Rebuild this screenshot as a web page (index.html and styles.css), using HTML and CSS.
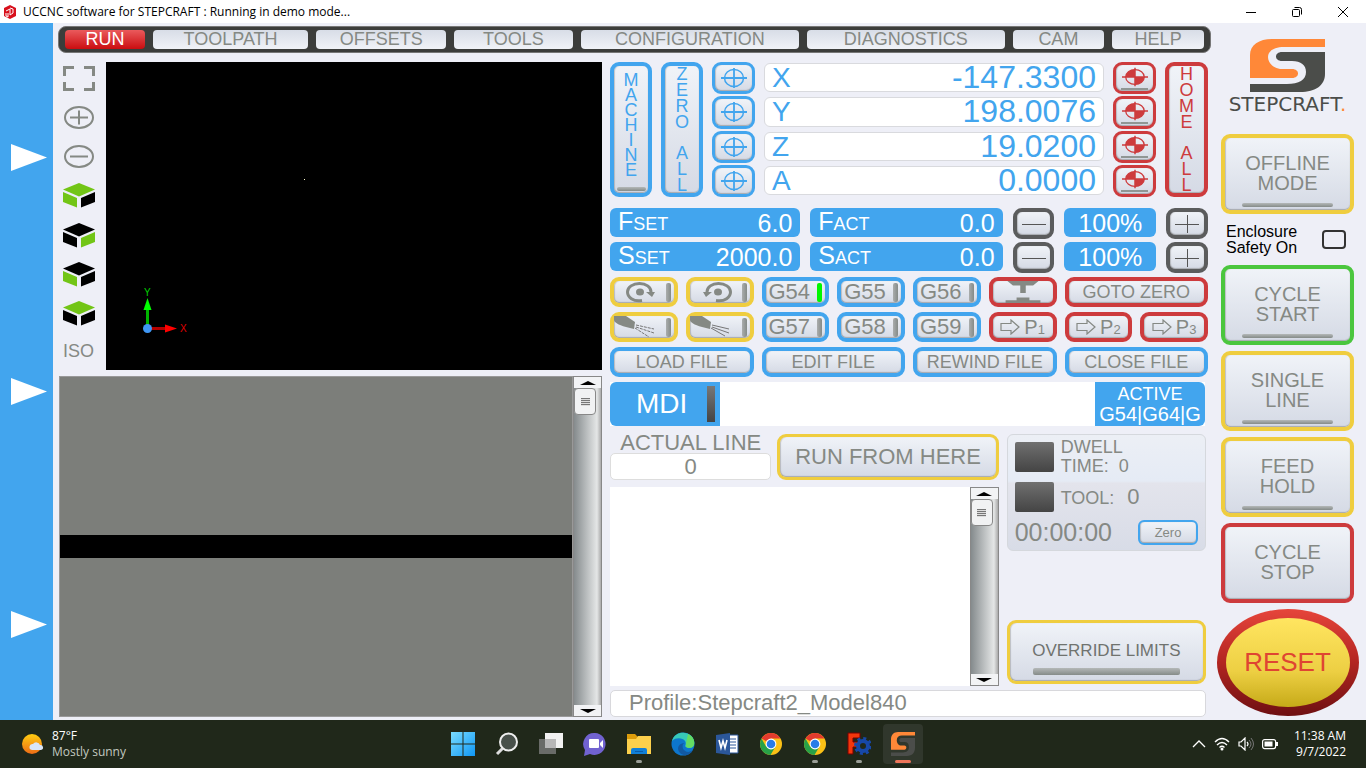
FILE: index.html
```html
<!DOCTYPE html>
<html lang="en">
<head>
<meta charset="utf-8">
<title>UCCNC software for STEPCRAFT</title>
<link rel="stylesheet" href="styles.css">
</head>
<body>
<svg class="defs" aria-hidden="true">
  <symbol id="target" viewBox="0 0 26 20"><ellipse cx="13" cy="10" rx="9.500" ry="8.500" fill="none" stroke="currentColor" stroke-width="1.500"/><path d="M0 10h26M13 0v20" stroke="currentColor" stroke-width="1.800"/></symbol>
  <symbol id="home" viewBox="0 0 28 20"><ellipse cx="14" cy="10" rx="10" ry="8" fill="none" stroke="currentColor" stroke-width="1.400"/><path d="M14 10V2A10 8 0 0 0 4 10zM14 10v8a10 8 0 0 0 10-8z" fill="currentColor"/><path d="M0 10h28M14 0v20" stroke="currentColor" stroke-width="1.600"/></symbol>
  <symbol id="arrow" viewBox="0 0 20 16"><path d="M1 4.500h10V1l8 7-8 7v-3.500H1z" fill="none" stroke="currentColor" stroke-width="1.200"/></symbol>
  <symbol id="spin" viewBox="0 0 32 22"><path d="M17 19.500C8 21 2.500 16 2.500 11 2.500 6 8 2.500 14.500 2.500S26 6 26 11" fill="none" stroke="currentColor" stroke-width="3"/><path d="M21 11h9l-3 5z" fill="currentColor"/><ellipse cx="15" cy="11" rx="4" ry="3.500" fill="currentColor"/></symbol>
  <symbol id="cs" viewBox="0 0 75 53" preserveAspectRatio="none"><path class="s-top" d="M75 0v8H34C24 8 18 12 18 18s6 12 14 12h10c8 0 8 9 0 9H0V16C0 6 9 0 22 0z"/><path class="s-bot" d="M75 13v22C75 46 66 53 50 53H0v-8h37c12 0 19-4 19-12 0-7-5-11-14-11H32c-8 0-8-9 0-9z"/></symbol>
  <symbol id="chrome" viewBox="0 0 24 24"><circle cx="12" cy="12" r="11" fill="#fbc116"/><path d="M12 12L2.500 6.500A11 11 0 0 1 21.500 6.500H12z" fill="#e33b2e"/><path d="M2.500 6.500A11 11 0 0 0 11.500 23l5-8.500L12 12 7 14.500z" fill="#28a148"/><circle cx="12" cy="12" r="5.400" fill="#fff"/><circle cx="12" cy="12" r="4.300" fill="#287be8"/></symbol>
</svg>

<header class="titlebar">
  <svg class="app-icon" viewBox="0 0 14 14"><path d="M7 0l6 3v8l-6 3-6-3V3z" fill="#d8101c"/><path d="M3 6l4-2v6l3-2V4L7 3M3 8v3l2 1V8" stroke="#fff" fill="none"/></svg>
  <span class="title">UCCNC software for STEPCRAFT : Running in demo mode...</span>
  <button class="win" aria-label="Minimize"><svg viewBox="0 0 12 12"><path d="M1 6.500h10" stroke="#000"/></svg></button>
  <button class="win" aria-label="Restore"><svg viewBox="0 0 12 12"><path d="M3.500 1.500h5a2 2 0 0 1 2 2v5" fill="none" stroke="#000"/><rect x="1.500" y="3.500" width="7" height="7" rx="1" fill="none" stroke="#000"/></svg></button>
  <button class="win" aria-label="Close"><svg viewBox="0 0 12 12"><path d="M1 1l10 10M11 1L1 11" stroke="#000"/></svg></button>
</header>

<main class="app">
  <aside class="rail">
    <button aria-label="Expand top"><svg viewBox="0 0 36 27"><path d="M0 0l36 13.500L0 27z" fill="#fff"/></svg></button>
    <button aria-label="Expand middle"><svg viewBox="0 0 36 27"><path d="M0 0l36 13.500L0 27z" fill="#fff"/></svg></button>
    <button aria-label="Expand bottom"><svg viewBox="0 0 36 27"><path d="M0 0l36 13.500L0 27z" fill="#fff"/></svg></button>
  </aside>

  <div class="workspace">
    <nav class="tabs">
      <button class="tab t80 active">RUN</button>
      <button class="tab t156">TOOLPATH</button>
      <button class="tab t130">OFFSETS</button>
      <button class="tab t119">TOOLS</button>
      <button class="tab t219">CONFIGURATION</button>
      <button class="tab t198">DIAGNOSTICS</button>
      <button class="tab t92">CAM</button>
      <button class="tab t92">HELP</button>
    </nav>

    <div class="columns">
      <section class="left">
        <div class="view">
          <div class="view-tools">
            <button aria-label="Fit"><svg viewBox="0 0 32 25"><path d="M11 1.500H1.500V10M21 1.500h9.500V10M1.500 16v7.500H11M30.500 16v7.500H21" fill="none" stroke="#858984" stroke-width="3"/></svg></button>
            <button aria-label="Zoom in"><svg viewBox="0 0 32 25"><ellipse cx="16" cy="12.500" rx="14" ry="10.500" fill="none" stroke="#858984" stroke-width="2"/><path d="M7 12.500h18M16 5.500v14" stroke="#858984" stroke-width="2"/></svg></button>
            <button aria-label="Zoom out"><svg viewBox="0 0 32 25"><ellipse cx="16" cy="12.500" rx="14" ry="10.500" fill="none" stroke="#858984" stroke-width="2"/><path d="M7 12.500h18" stroke="#858984" stroke-width="2"/></svg></button>
            <button aria-label="View perspective"><svg viewBox="0 0 32 25"><path d="M16 0l16 6.500-16 7L0 6.500z" fill="#72c516"/><path d="M0 9l14 6v9.500L0 19z" fill="#72c516"/><path d="M32 9l-14 6v9.500L32 19z"/></svg></button>
            <button aria-label="View right"><svg viewBox="0 0 32 25"><path d="M16 0l16 6.500-16 7L0 6.500z"/><path d="M0 9l14 6v9.500L0 19z"/><path d="M32 9l-14 6v9.500L32 19z" fill="#72c516"/></svg></button>
            <button aria-label="View front"><svg viewBox="0 0 32 25"><path d="M16 0l16 6.500-16 7L0 6.500z"/><path d="M0 9l14 6v9.500L0 19z" fill="#72c516"/><path d="M32 9l-14 6v9.500L32 19z"/></svg></button>
            <button aria-label="View top"><svg viewBox="0 0 32 25"><path d="M16 0l16 6.500-16 7L0 6.500z" fill="#72c516"/><path d="M0 9l14 6v9.500L0 19z"/><path d="M32 9l-14 6v9.500L32 19z"/></svg></button>
            <button class="iso">ISO</button>
          </div>
          <div class="canvas">
            <span class="point"></span>
            <svg class="axes" viewBox="0 0 50 50"><path d="M7.500 35V17" stroke="#00b400" stroke-width="3"/><path d="M7.500 8l4 12h-8z" fill="#00ff00"/><path d="M10 38.500h17" stroke="#b40000" stroke-width="3"/><path d="M37 38.500l-12-4v8z" fill="red"/><circle cx="7.500" cy="38.500" r="4.500" fill="#3f97f5"/></svg>
            <span class="axis-y">Y</span><span class="axis-x">X</span>
          </div>
        </div>
        <div class="code">
          <div class="code-lines"><div class="code-current"></div></div>
          <div class="scroll"><button class="up" aria-label="Scroll up"></button><div class="thumb"></div><button class="down" aria-label="Scroll down"></button></div>
        </div>
      </section>

      <section class="right">
        <div class="dro">
          <button class="key blue tall machine"><span class="stack">MACHINE</span><i class="bar"></i></button>
          <button class="key blue tall"><span class="stack">ZERO</span><span class="stack">ALL</span></button>
          <div class="rows">
            <button class="key blue" aria-label="Zero X"><svg class="ic"><use href="#target"/></svg></button>
            <button class="key blue" aria-label="Zero Y"><svg class="ic"><use href="#target"/></svg></button>
            <button class="key blue" aria-label="Zero Z"><svg class="ic"><use href="#target"/></svg></button>
            <button class="key blue" aria-label="Zero A"><svg class="ic"><use href="#target"/></svg></button>
          </div>
          <div class="rows">
            <div class="axis"><span>X</span><output>-147.3300</output></div>
            <div class="axis"><span>Y</span><output>198.0076</output></div>
            <div class="axis"><span>Z</span><output>19.0200</output></div>
            <div class="axis"><span>A</span><output>0.0000</output></div>
          </div>
          <div class="rows">
            <button class="key red homekey" aria-label="Home X"><svg class="ic"><use href="#home"/></svg><i></i></button>
            <button class="key red homekey" aria-label="Home Y"><svg class="ic"><use href="#home"/></svg><i></i></button>
            <button class="key red homekey" aria-label="Home Z"><svg class="ic"><use href="#home"/></svg><i></i></button>
            <button class="key red homekey" aria-label="Home A"><svg class="ic"><use href="#home"/></svg><i></i></button>
          </div>
          <button class="key red tall"><span class="stack">HOME</span><span class="stack">ALL</span></button>
        </div>

        <div class="feeds">
          <div class="chip"><span class="name">F<small>SET</small></span><output>6.0</output></div>
          <div class="chip"><span class="name">F<small>ACT</small></span><output>0.0</output></div>
          <button class="key dark" aria-label="Feed minus"><svg class="sign" viewBox="0 0 24 20"><path d="M0 10.500h24" stroke="#555"/></svg></button>
          <div class="chip pct"><output>100%</output></div>
          <button class="key dark" aria-label="Feed plus"><svg class="sign" viewBox="0 0 24 20"><path d="M0 10.500h24M12.500 1v18" stroke="#555"/></svg></button>
          <div class="chip"><span class="name">S<small>SET</small></span><output>2000.0</output></div>
          <div class="chip"><span class="name">S<small>ACT</small></span><output>0.0</output></div>
          <button class="key dark" aria-label="Speed minus"><svg class="sign" viewBox="0 0 24 20"><path d="M0 10.500h24" stroke="#555"/></svg></button>
          <div class="chip pct"><output>100%</output></div>
          <button class="key dark" aria-label="Speed plus"><svg class="sign" viewBox="0 0 24 20"><path d="M0 10.500h24M12.500 1v18" stroke="#555"/></svg></button>
        </div>

        <div class="keys">
          <button class="key yellow lit" aria-label="Spindle clockwise"><svg class="spin"><use href="#spin"/></svg><i class="led"></i></button>
          <button class="key yellow lit" aria-label="Spindle counterclockwise"><svg class="spin flip"><use href="#spin"/></svg><i class="led"></i></button>
          <button class="key blue lit">G54<i class="led on"></i></button>
          <button class="key blue lit">G55<i class="led"></i></button>
          <button class="key blue lit">G56<i class="led"></i></button>
          <button class="key red" aria-label="Probe"><svg class="probe" viewBox="0 0 38 24"><path d="M2 0h34l-6 5h-8v8h-6V5H8zM12 18h14v3h12v3H0v-3h12z" fill="#858984"/></svg></button>
          <button class="key red span2 mid">GOTO ZERO</button>
          <button class="key yellow lit" aria-label="Mist"><svg class="spray" viewBox="0 0 44 22"><path d="M0 0h12l9 6-1 7-8-2C4 9 0 6 0 4z" fill="#858984"/><path d="M22 9l18 4M22 11l18 6M21 12l14 9" stroke="#777" stroke-dasharray="3 1" fill="none"/></svg><i class="led"></i></button>
          <button class="key yellow lit" aria-label="Flood"><svg class="spray" viewBox="0 0 44 22"><path d="M0 0h12l9 6-1 7-8-2C4 9 0 6 0 4z" fill="#858984"/><path d="M22 9l17 4M22 11l17 6M21 12l14 8" stroke="#777" fill="none"/></svg><i class="led"></i></button>
          <button class="key blue lit">G57<i class="led"></i></button>
          <button class="key blue lit">G58<i class="led"></i></button>
          <button class="key blue lit">G59<i class="led"></i></button>
          <button class="key red pos"><svg class="arr"><use href="#arrow"/></svg><span>P<small>1</small></span></button>
          <button class="key red pos"><svg class="arr"><use href="#arrow"/></svg><span>P<small>2</small></span></button>
          <button class="key red pos"><svg class="arr"><use href="#arrow"/></svg><span>P<small>3</small></span></button>
          <button class="key blue span2 mid">LOAD FILE</button>
          <button class="key blue span2 mid">EDIT FILE</button>
          <button class="key blue span2 mid">REWIND FILE</button>
          <button class="key blue span2 mid">CLOSE FILE</button>
        </div>

        <div class="mdi">
          <label for="mdi">MDI <i></i></label>
          <input id="mdi" type="text">
          <div class="modal"><span>ACTIVE</span><span class="codes">G54|G64|G</span></div>
        </div>

        <div class="lower">
          <div class="run">
            <div class="run-top">
              <div class="line"><label for="line">ACTUAL LINE</label><input id="line" type="text" value="0"></div>
              <button class="key yellow large">RUN FROM HERE</button>
            </div>
            <div class="log"><div class="log-text"></div><div class="scroll"><button class="up" aria-label="Scroll up"></button><div class="thumb"></div><button class="down" aria-label="Scroll down"></button></div></div>
          </div>
          <div class="status">
            <div class="panel">
              <div class="stat"><i class="lamp"></i><span class="dwell">DWELL<br>TIME:&nbsp; <b>0</b></span></div>
              <div class="stat"><i class="lamp"></i><span class="tool">TOOL: <b>0</b></span></div>
              <div class="clock"><time>00:00:00</time><button class="key blue zero">Zero</button></div>
            </div>
            <button class="key yellow override">OVERRIDE LIMITS<i class="bar"></i></button>
          </div>
        </div>
        <div class="profile">Profile:Stepcraft2_Model840</div>
      </section>
    </div>
  </div>

  <aside class="actions">
    <div class="brand"><svg class="logo"><use href="#cs"/></svg><span>STEPCRAFT<b>.</b></span></div>
    <button class="key yellow big">OFFLINE<br>MODE<i class="bar"></i></button>
    <label class="safety"><span>Enclosure<br>Safety On</span><input type="checkbox"></label>
    <div class="stackkeys">
      <button class="key green big">CYCLE<br>START<i class="bar"></i></button>
      <button class="key yellow big">SINGLE<br>LINE<i class="bar"></i></button>
      <button class="key yellow big">FEED<br>HOLD<i class="bar"></i></button>
      <button class="key red big">CYCLE<br>STOP</button>
    </div>
    <button class="reset">RESET</button>
  </aside>
</main>

<footer class="taskbar">
  <div class="weather">
    <svg viewBox="0 0 24 24"><defs><linearGradient id="sun" x2="0" y2="1"><stop stop-color="#ffcd11"/><stop offset="1" stop-color="#ee6c16"/></linearGradient></defs><circle cx="11" cy="12" r="10" fill="url(#sun)"/><path d="M11 18a3 3 0 0 1 1-6 4 4 0 0 1 7 1 2.500 2.500 0 0 1 1 5z" fill="#d9e5f7"/></svg>
    <div>87°F<br><span>Mostly sunny</span></div>
  </div>
  <div class="apps">
    <button aria-label="Start"><svg viewBox="0 0 24 24"><defs><linearGradient id="win" x2="1" y2="1"><stop stop-color="#7adcff"/><stop offset="1" stop-color="#0f97f5"/></linearGradient></defs><path d="M0 0h11.500v11.500H0zM12.500 0H24v11.500H12.500zM0 12.500h11.500V24H0zM12.500 12.500H24V24H12.500z" fill="url(#win)"/></svg></button>
    <button aria-label="Search"><svg viewBox="0 0 24 24"><circle cx="13.500" cy="10" r="8.500" fill="#48504a" stroke="#eee" stroke-width="2"/><path d="M7.500 16.500L2 22" stroke="#ddd" stroke-width="3"/></svg></button>
    <button aria-label="Task view"><svg viewBox="0 0 24 24"><path d="M6 1h18v15H6z" fill="#f2f2f2"/><path d="M0 7h17v15H0z" fill="#777" opacity=".85"/><path d="M6 7h11v9H6z" fill="#b7b7b7"/></svg></button>
    <button aria-label="Chat"><svg viewBox="0 0 24 24"><path d="M12 1a11 11 0 1 1-5 21l-6 2 1-6A11 11 0 0 1 12 1z" fill="#7162d0"/><rect x="6" y="7" width="10" height="9" rx="1" fill="#fff"/><path d="M17 11l3-3v8l-3-3z" fill="#fff"/></svg></button>
    <button class="open" aria-label="File Explorer"><svg viewBox="0 0 24 24"><path d="M0 2h8l3 3h13v17H0z" fill="#dc9c0b"/><path d="M0 7h9l2-3h13v18H0z" fill="#fcd04c"/><path d="M4 22v-4q0-2 2-2h12q2 0 2 2v4z" fill="#1180d7"/><path d="M8 19h8v1H8z" fill="#0a5ba8"/></svg></button>
    <button aria-label="Edge"><svg viewBox="0 0 24 24"><circle cx="12" cy="12" r="11.500" fill="#0d76cd"/><path d="M1 9C3 2 9 0 14 1c7 1 10 7 9 12-1 3-5 4-8 2-2-1 1-3-1-6C12 6 5 5 1 9z" fill="#37c9b7"/><path d="M17 2c5 2 7 7 6 11-1 3-5 4-8 2-1-1 1-2 0-4z" fill="#64dc63"/><path d="M14 11c-3 0-3 5-1 7 3 3 6 2 9 0-2 4-6 6-9 5-8-2-8-12 1-12z" fill="#1259a2"/></svg></button>
    <button aria-label="Word"><svg viewBox="0 0 24 24"><path d="M12 3h11v18H12z" fill="#fff" stroke="#2b579a"/><path d="M14 7h7M14 10h7M14 13h7M14 16h7" stroke="#2b579a"/><path d="M1 3l14-2v22L1 21z" fill="#2b579a"/><path d="M4 8l2 8 2-7 2 7 2-8" fill="none" stroke="#fff" stroke-width="1.600"/></svg></button>
    <button aria-label="Chrome"><svg><use href="#chrome"/></svg></button>
    <button class="open" aria-label="Chrome window"><svg><use href="#chrome"/></svg></button>
    <button class="open" aria-label="FreeCAD"><svg viewBox="0 0 24 24"><path d="M1 1h12v5H6v4h5v5H6v7H1z" fill="#f4360c" stroke="#700"/><circle cx="16" cy="14" r="5" fill="none" stroke="#1748a8" stroke-width="4"/><circle cx="16" cy="14" r="7.500" fill="none" stroke="#1748a8" stroke-width="3" stroke-dasharray="3 2.890"/></svg></button>
    <button class="open current" aria-label="Stepcraft"><svg class="mini"><use href="#cs"/></svg></button>
  </div>
  <div class="tray">
    <svg viewBox="0 0 14 14"><path d="M1 10l6-6 6 6" fill="none" stroke="#fff" stroke-width="1.300"/></svg>
    <svg class="wifi" viewBox="0 0 16 14"><path d="M1 5q7-7 14 0M3 8q5-5 10 0M5.500 10.500q2.500-2.500 5 0" fill="none" stroke="#fff" stroke-width="1.400"/><circle cx="8" cy="12" r="1.500" fill="#fff"/></svg>
    <svg class="wifi" viewBox="0 0 16 14"><path d="M1 5h2l4-4v12L3 9H1zM9 5q2 2 0 4" fill="none" stroke="#fff" stroke-width="1.200"/><path d="M11 3q4 4 0 8M13 1q5 6 0 12" fill="none" stroke="#777"/></svg>
    <svg class="wifi" viewBox="0 0 16 14"><rect x=".6" y="2.600" width="13" height="9" rx="2" fill="none" stroke="#fff" stroke-width="1.200"/><path d="M2.500 4.500h8v5h-8zM14 5h2v4h-2z" fill="#fff"/></svg>
    <div class="when">11:38 AM<br>9/7/2022</div>
  </div>
</footer>
</body>
</html>
```
FILE: styles.css
```css
* { box-sizing: border-box; }
body {
  margin: 0;
  min-height: 100vh;
  display: flex;
  flex-direction: column;
  background: #eeeff7;
  color: #858984;
  font-family: "Liberation Sans", Arial, sans-serif;
}
button { border: 0; padding: 0; margin: 0; background: none; font: inherit; color: inherit; }
input { font: inherit; color: inherit; min-width: 0; }
i, b { font-style: normal; font-weight: normal; }
svg { display: block; flex: none; }
.defs { display: none; }

.titlebar { display: flex; align-items: center; height: 23px; padding-left: 3px; background: #fff; color: #000; font: 12px/23px "Open Sans", "Noto Sans", sans-serif; }
.app-icon { width: 14px; height: 14px; margin-right: 6px; }
.title { flex: 1; }
.win { width: 46px; height: 22px; display: grid; place-items: center; }
.win svg { width: 12px; height: 12px; }

.app { flex: 1; display: flex; }
.rail { width: 53px; background: #42a5ee; display: flex; flex-direction: column; justify-content: space-between; padding: 121px 0 82px 11px; }
.rail svg { width: 36px; height: 27px; }
.workspace { flex: 1; min-width: 0; display: flex; flex-direction: column; gap: 9px; padding: 3px 2px 3px 5px; }

.tabs { display: flex; gap: 8px; height: 27px; padding: 3px 6px; background: #3c3d3b; border: 1px solid #777; border-radius: 8px; }
.tab { flex-basis: 0; min-width: 0; border-radius: 4px; background: linear-gradient(#d8dde7, #f0f2f7); font-size: 18px; line-height: 19px; }
.tab.active { background: linear-gradient(#ea5a5c, #cb0d10); color: #fff; }
.t80 { flex-grow: 80; } .t156 { flex-grow: 156; } .t130 { flex-grow: 130; } .t119 { flex-grow: 119; }
.t219 { flex-grow: 219; } .t198 { flex-grow: 198; } .t92 { flex-grow: 92; }

.columns { flex: 1; display: grid; grid-template-columns: 543fr 598fr; gap: 8px; padding: 0 3px 0 1px; }
.left { display: flex; flex-direction: column; gap: 6px; }
.view { display: flex; height: 308px; }
.view-tools { width: 47px; display: flex; flex-direction: column; justify-content: space-between; align-items: flex-start; padding: 4px 0 8px 4px; }
.view-tools svg { width: 32px; height: 25px; }
.iso { font-size: 18px; line-height: 22px; }
.canvas { flex: 1; position: relative; background: #000; font-size: 10px; line-height: 10px; }
.point { position: absolute; left: 40%; top: 38%; width: 1px; height: 1px; background: #ffc; }
.axes { position: absolute; left: 34px; bottom: 30px; width: 50px; height: 50px; }
.axis-y { position: absolute; left: 38px; bottom: 72px; color: #00d000; }
.axis-x { position: absolute; left: 74px; bottom: 36px; color: #e00000; }

.code { flex: 1; display: flex; min-height: 240px; }
.code-lines { flex: 1; display: flex; align-items: center; background: #7c7e7a; border: 1px solid #999; }
.code-current { width: 100%; height: 23px; background: #000; }
.scroll { width: 29px; display: flex; flex-direction: column; border: 1px solid #888; background: linear-gradient(90deg, #858b8d, #e4e6e6 85%, #aaa); }
.scroll .up, .scroll .down { height: 11px; display: grid; place-items: center; background: #f2f3f5; }
.up::before { content: ""; border: 8px solid transparent; border-top: 0; border-bottom: 4px solid #000; }
.down::before { content: ""; border: 8px solid transparent; border-bottom: 0; border-top: 4px solid #000; }
.thumb { width: 22px; height: 27px; margin-bottom: auto; border: 1px solid #888; border-radius: 4px; background: repeating-linear-gradient(#777 0 1px, #ddd 1px 2px) center / 9px 8px no-repeat, #f1f2f3; }

.right { display: flex; flex-direction: column; min-width: 0; }
.key {
  display: flex; align-items: center; justify-content: center;
  border: 4px solid; border-radius: 9px;
  background: linear-gradient(#f0f3f8, #d5dae5) padding-box;
  box-shadow: inset 0 -1px 1px #7777, inset 1px 0 1px #7775;
  min-width: 0;
}
.blue { border-color: #42a5ee; }
.red { border-color: #cd3b3d; }
.yellow { border-color: #efcd3f; }
.green { border-color: #4bc63e; }
.dark { border-color: #5b5c5d; }
.bar { display: block; height: 4px; border-radius: 2px; background: linear-gradient(#b4b8b8, #858b88); }

.dro { display: grid; grid-template-columns: 42px 42px 43px 1fr 43px 43px; column-gap: 9px; height: 135px; margin-bottom: 11px; }
.tall { flex-direction: column; gap: 15px; font-size: 18px; line-height: 16px; color: #42a5ee; }
.tall.red { color: #cd3b3d; }
.machine { justify-content: space-between; gap: 0; padding: 7px 3px 2px; line-height: 15px; }
.machine .bar { width: 29px; }
.stack { width: 15px; overflow-wrap: anywhere; text-align: center; }
.rows { display: grid; grid-template-rows: repeat(4, minmax(0, 1fr)); row-gap: 2px; }
.rows .key { border-width: 3px; }
.rows .blue { color: #42a5ee; }
.rows .red { color: #cd3b3d; }
.ic { width: 26px; height: 20px; }
.homekey { flex-direction: column; gap: 1px; }
.homekey i { width: 27px; height: 2px; background: #909694; }
.axis { display: flex; align-items: center; justify-content: space-between; margin: 1px 0 2px; padding: 0 7px; background: #fff; border: 1px solid #d9dade; border-radius: 6px; color: #42a5ee; font-size: 32px; line-height: 27px; }
.axis span { font-size: 28px; }

.feeds { display: grid; grid-template-columns: 191fr 193fr 42fr 92fr 42fr; gap: 3px 10px; margin-bottom: 4px; }
.feeds .key { height: 31px; }
.chip { display: flex; justify-content: space-between; align-items: center; height: 29px; padding: 0 8px; border-radius: 6px; background: #42a5ee; color: #fff; font-size: 25px; line-height: 28px; }
.chip small { font-size: 18px; }
.chip.pct { justify-content: center; }
.sign { width: 24px; height: 20px; }

.keys { display: grid; grid-template-columns: repeat(8, 1fr); gap: 5px 8px; margin-bottom: 5px; }
.keys .key { height: 30px; font-size: 20px; }
.span2 { grid-column: span 2; }
.keys .mid { font-size: 18px; }
.keys .lit { justify-content: space-between; padding: 0 3px; font-size: 22px; }
.led { width: 5px; height: 19px; border-radius: 2px; background: linear-gradient(90deg, #aaadad, #858b88); }
.led.on { background: #00f600; }
.spin { width: 32px; height: 22px; margin-left: 8px; }
.flip { transform: scaleX(-1); }
.spray { width: 44px; height: 22px; margin-left: -3px; }
.probe { width: 38px; height: 22px; }
.pos { gap: 4px; }
.pos small { font-size: 13px; }
.arr { width: 20px; height: 16px; }

.mdi { display: flex; height: 44px; margin: 0 3px 8px 0; background: #fff; }
.mdi label { width: 110px; display: flex; align-items: center; justify-content: space-between; padding: 0 5px 0 26px; border-radius: 6px 0 0 6px; background: #42a5ee; color: #fff; font-size: 28px; }
.mdi label i { width: 8px; height: 36px; background: linear-gradient(#777, #444); }
.mdi input { flex: 1; border: 0; background: #fff; }
.modal { width: 110px; display: flex; flex-direction: column; align-items: center; justify-content: center; border-radius: 0 6px 6px 0; background: #42a5ee; color: #fff; font-size: 18px; line-height: 20px; }
.codes { font-size: 20px; }

.lower { flex: 1; display: grid; grid-template-columns: 390fr 200fr; gap: 8px; margin: 0 2px 4px 0; }
.run, .status { display: flex; flex-direction: column; }
.run { gap: 7px; }
.run-top { display: grid; grid-template-columns: 162fr 222fr; gap: 6px; }
.line { display: flex; flex-direction: column; align-items: center; font-size: 22px; line-height: 18px; }
.line input { width: 100%; height: 27px; margin-top: 1px; border: 1px solid #ddd; border-radius: 5px; background: #fff; text-align: center; }
.large { font-size: 22px; border-width: 3px; }
.log { flex: 1; min-height: 120px; display: flex; background: #fff; }
.log-text { flex: 1; }
.status { justify-content: space-between; padding-bottom: 2px; }
.panel { padding: 3px 7px; border: 1px solid #d5d8dd; border-radius: 6px; background: linear-gradient(#eceff5, #e5ebf5 40%, #e3e4ec 42%, #d8dce7); display: flex; flex-direction: column; gap: 6px; }
.stat { display: flex; align-items: center; gap: 7px; }
.lamp { width: 39px; height: 30px; border-radius: 2px; background: linear-gradient(#707070, #444); }
.dwell { font-size: 18px; line-height: 19px; }
.tool { font-size: 18px; }
.tool b { font-size: 22px; margin-left: 8px; }
.clock { display: flex; justify-content: space-between; align-items: center; font-size: 25px; }
.zero { width: 60px; height: 25px; border-width: 2px; border-radius: 6px; font-size: 13px; }
.override { height: 64px; flex-direction: column; gap: 7px; padding-top: 12px; border-width: 3px; font-size: 17px; color: #70736f; }
.override .bar { width: 147px; height: 7px; }
.profile { height: 27px; margin-right: 2px; padding-left: 18px; border: 1px solid #d8d8dc; border-radius: 5px; background: #fff; font-size: 22px; line-height: 24px; }

.actions { width: 153px; display: flex; flex-direction: column; align-items: center; padding: 16px 8px 4px 4px; }
.brand { display: flex; flex-direction: column; align-items: center; gap: 2px; height: 95px; color: #4b4d4a; font: 20px/20px "DejaVu Sans", sans-serif; }
.brand b { color: #ff8838; }
.logo { width: 75px; height: 53px; }
.s-top { fill: #ff8838; }
.s-bot { fill: #4b4d4a; }
.big { width: 133px; height: 80px; position: relative; padding-bottom: 3px; font-size: 20px; line-height: 20px; }
.big .bar { position: absolute; left: 17px; right: 17px; bottom: 3px; }
.safety { width: 133px; height: 51px; display: flex; align-items: center; justify-content: space-between; padding: 0 8px 0 5px; color: #000; font-size: 16px; line-height: 16px; }
.safety input { appearance: none; width: 24px; height: 19px; margin: 0; border: 2px solid #333; border-radius: 4px; }
.stackkeys { display: flex; flex-direction: column; gap: 6px; margin-bottom: 6px; }
.reset { width: 142px; height: 107px; border: 9px solid transparent; border-radius: 50%; background: linear-gradient(#ffe560, #edcf43 60%, #c6aa18) padding-box, linear-gradient(#e6453b, #b22521 50%, #6e1012) border-box; color: #df4532; font-size: 26px; }

.taskbar { height: 48px; display: grid; grid-template-columns: 1fr auto 1fr; background: #20281a; color: #fff; font: 12px/16px "Open Sans", "Noto Sans", sans-serif; }
.weather { display: flex; align-items: center; gap: 7px; padding-left: 21px; }
.weather svg { width: 24px; height: 24px; }
.weather span { color: #c3c8c0; }
.apps { display: flex; }
.apps button { width: 44px; position: relative; display: grid; place-items: center; }
.apps svg { width: 24px; height: 24px; }
.open::after { content: ""; position: absolute; bottom: 5px; left: 19px; width: 6px; height: 3px; border-radius: 2px; background: #9b9f98; }
.apps .current { width: 40px; margin: 4px 2px; border-radius: 4px; background: #30372c; }
.current::after { bottom: 1px; left: 12px; width: 16px; background: #ee765b; }
.mini .s-bot { fill: #999da1; }
.tray { display: flex; align-items: center; justify-content: flex-end; gap: 8px; padding-right: 20px; }
.tray svg { width: 14px; height: 14px; }
.tray .wifi { width: 16px; }
.when { margin-left: 8px; text-align: right; }
```
